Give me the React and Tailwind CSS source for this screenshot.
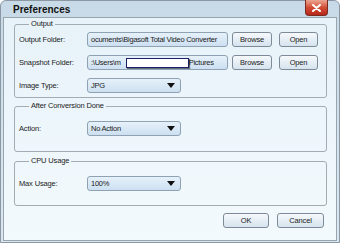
import React from 'react';

const font = { fontFamily: '"Liberation Sans", Arial, sans-serif' };

function Field({ children, className = '' }) {
  return (
    <div className={`h-[15px] flex items-center pl-[3px] border border-[#8ea2b4] rounded-[3px] bg-gradient-to-b from-[#e6f1fa] to-[#cde0f1] text-[7.5px] tracking-[-0.25px] text-[#1b1b1b] overflow-hidden whitespace-nowrap ${className}`}>
      {children}
    </div>
  );
}

function Btn({ label, className = '' }) {
  return (
    <button className={`h-[15px] flex items-center justify-center border border-[#7d8b98] rounded-[3px] bg-gradient-to-b from-[#f6f9fc] to-[#d6e3ee] text-[7.5px] tracking-[-0.15px] text-[#1b1b1b] ${className}`}>
      {label}
    </button>
  );
}

function Select({ value }) {
  return (
    <Field className="w-[94px] justify-between pr-[5px]">
      <span>{value}</span>
      <svg width="8" height="5" viewBox="0 0 8 5">
        <path d="M0 0 H8 L4 5 Z" fill="#111" />
      </svg>
    </Field>
  );
}

function Row({ label, children }) {
  return (
    <div className="flex items-center h-[15px]">
      <span className="w-[68px] text-[7.5px] tracking-[-0.15px] text-[#1b1b1b]">{label}</span>
      {children}
    </div>
  );
}

function Group({ title, className = '', children }) {
  return (
    <fieldset className={`border border-[#a3abb3] rounded-[3px] pl-[4px] pr-[4px] ${className}`}>
      <legend className="ml-[10px] px-[2px] text-[7.5px] tracking-[-0.15px] leading-[10px] text-[#1b1b1b]">{title}</legend>
      {children}
    </fieldset>
  );
}

export default function App() {
  return (
    <div style={font} className="w-[340px] h-[243px] flex flex-col border border-[#8b98a4] rounded-t-[6px] bg-gradient-to-b from-[#c8dae7] to-[#dbe8f1] px-[2px] pb-[1px]">
      {/* title bar */}
      <div className="relative h-[16px] flex items-center pl-[10px]">
        <span className="text-[10px] font-bold text-[#111]">Preferences</span>
        <div className="absolute right-[9px] -top-[1px] w-[23px] h-[16px] rounded-b-[4px] border border-t-0 border-[#7b2a1f] bg-gradient-to-b from-[#eaa593] via-[#d24c35] to-[#b5261a] flex items-center justify-center">
          <svg width="9" height="8" viewBox="0 0 9 8">
            <path d="M1 1 L8 7 M8 1 L1 7" stroke="#fff" strokeWidth="2" strokeLinecap="round" />
          </svg>
        </div>
      </div>

      {/* content */}
      <div className="flex-1 flex flex-col border border-[#98a4ae] bg-gradient-to-b from-[#e7f2f9] to-[#f3fafd] pl-[10px] pr-[9px] pt-[1px]">
        <Group title="Output" className="pt-[3px] pb-[4px]">
          <div className="flex flex-col gap-[8px]">
            <Row label="Output Folder:">
              <Field className="w-[141px]">ocuments\Bigasoft Total Video Converter</Field>
              <Btn label="Browse" className="ml-[4px] w-[40px]" />
              <Btn label="Open" className="ml-[7px] w-[39px]" />
            </Row>
            <Row label="Snapshot Folder:">
              <Field className="w-[141px] relative">
                <span>:\Users\m</span>
                <span className="ml-[66px]">\Pictures</span>
                <span className="absolute left-[38px] top-[2px] w-[63px] h-[10px] bg-white border-[1.5px] border-[#1c1f66] shadow-[1px_1px_1px_rgba(0,0,0,0.5)]" />
              </Field>
              <Btn label="Browse" className="ml-[4px] w-[40px]" />
              <Btn label="Open" className="ml-[7px] w-[39px]" />
            </Row>
            <Row label="Image Type:">
              <Select value="JPG" />
            </Row>
          </div>
        </Group>

        <Group title="After Conversion Done" className="mt-[3px] pt-[10px] pb-[15px]">
          <Row label="Action:">
            <Select value="No Action" />
          </Row>
        </Group>

        <Group title="CPU Usage" className="mt-[4px] pt-[10px] pb-[14px]">
          <Row label="Max Usage:">
            <Select value="100%" />
          </Row>
        </Group>

        <div className="flex justify-end gap-[8px] mt-[7px] pr-[3px]">
          <Btn label="OK" className="w-[46px]" />
          <Btn label="Cancel" className="w-[47px]" />
        </div>
      </div>
    </div>
  );
}
